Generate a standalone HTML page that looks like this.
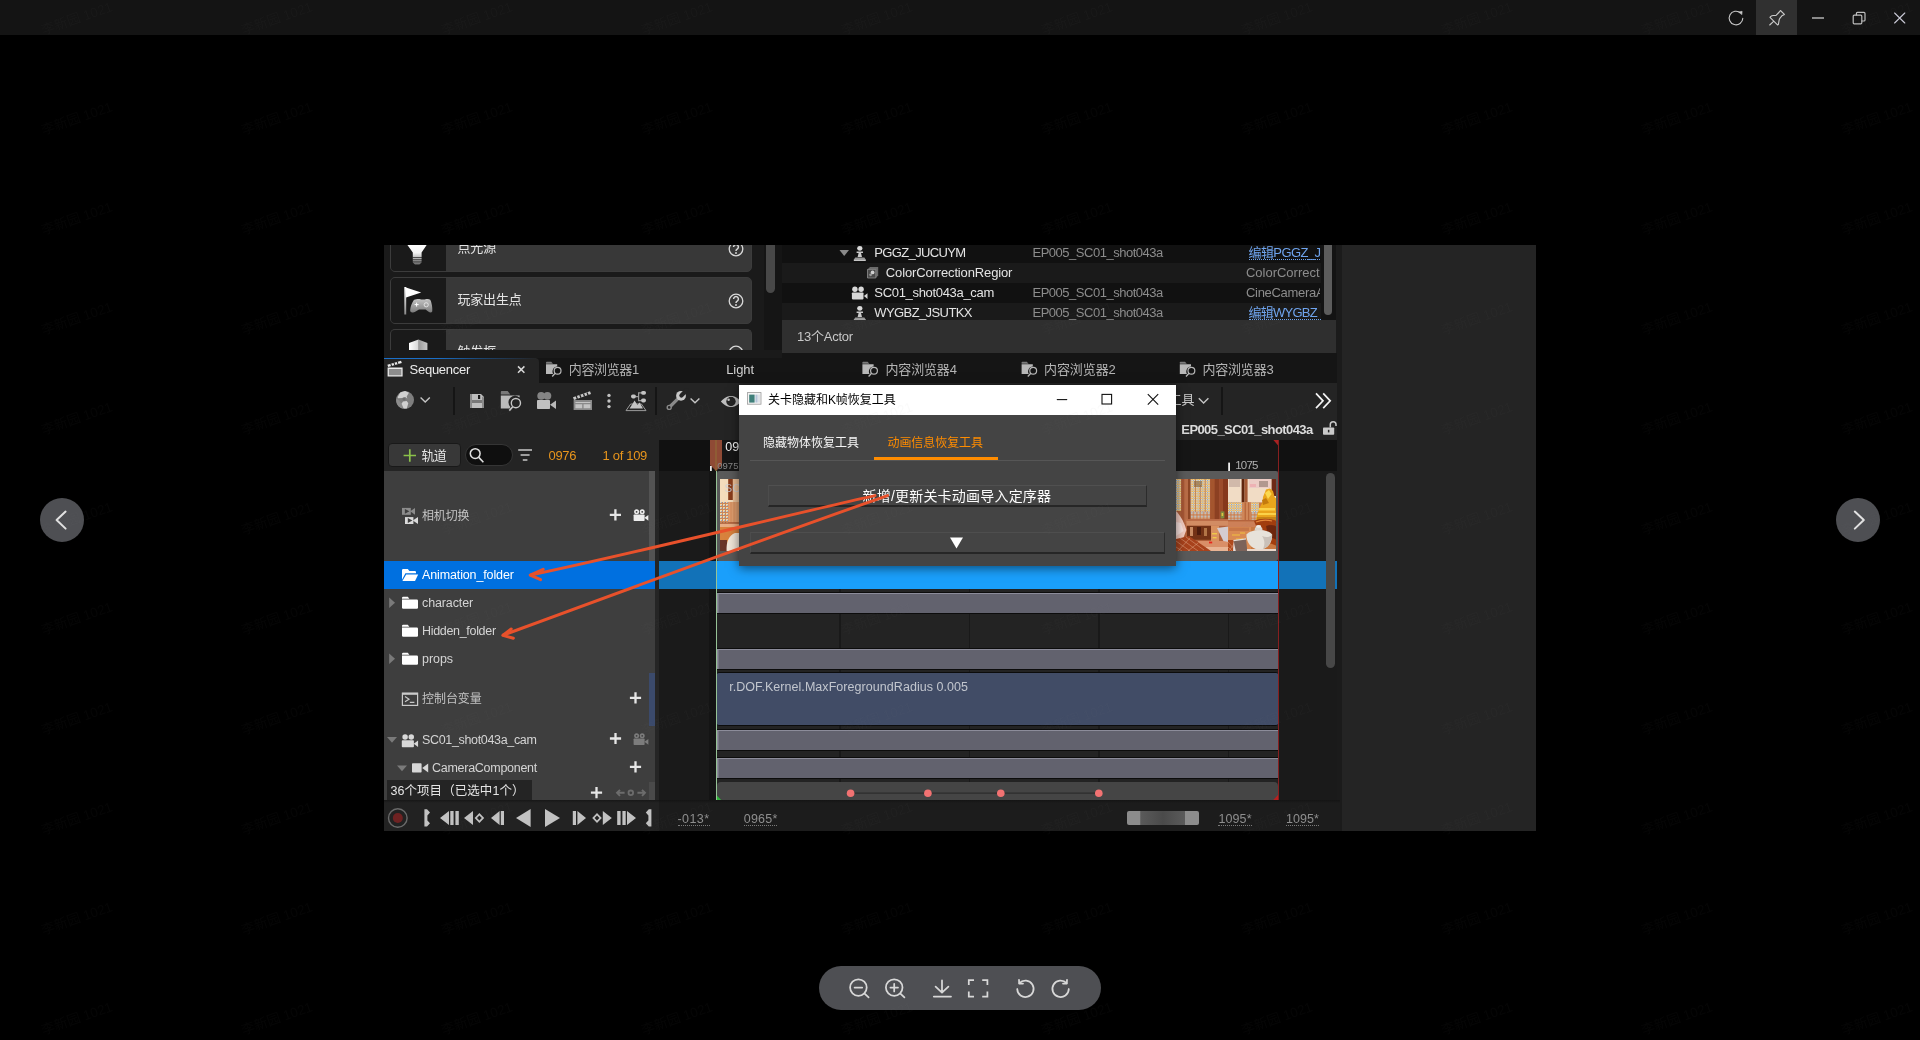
<!DOCTYPE html>
<html lang="zh"><head><meta charset="utf-8"><title>viewer</title>
<style>
*{box-sizing:border-box;margin:0;padding:0}
html,body{width:1920px;height:1040px;background:#000;overflow:hidden}
body{position:relative;font-family:"Liberation Sans","Noto Sans CJK SC",sans-serif;color:#c0c0c0;font-size:12.5px}
.a{position:absolute}
.t{position:absolute;white-space:nowrap;line-height:16px;height:16px}
#topbar{left:0;top:0;width:1920px;height:35px;background:#141414}
#pinbg{left:1756px;top:0;width:41px;height:35px;background:#303030}
.circ{width:44px;height:44px;border-radius:22px;background:#4e4f53}
#pill{left:819px;top:966px;width:282px;height:44px;border-radius:22px;background:#4e4f53}
#img{left:384px;top:245px;width:1152px;height:586px;overflow:hidden;background:#242424}
#w{left:-384px;top:-245px;width:1920px;height:1040px;will-change:transform}
svg{position:absolute;overflow:visible}
.wm{position:absolute;width:90px;height:18px;line-height:18px;text-align:center;font-size:13.5px;color:rgba(150,150,150,.042);transform:rotate(-19deg);white-space:nowrap;pointer-events:none}
.card{position:absolute;left:390px;width:362px;height:47px;border:1px solid #3c3c3c;border-radius:5px;background:#383838;overflow:hidden}
.card i{position:absolute;left:0;top:0;width:55px;height:47px;background:#1a1a1a}
.orow{position:absolute;left:782px;width:554px}
</style></head><body>
<div class="a" id="topbar"></div><div class="a" id="pinbg"></div>
<div class="a circ" style="left:40px;top:498px"></div>
<div class="a circ" style="left:1836px;top:498px"></div>
<div class="a" id="pill"></div>
<svg class="a" style="left:0;top:0" width="1920" height="1040" viewBox="0 0 1920 1040" fill="none" stroke="#d0d0d0" stroke-width="1.2" stroke-linecap="round" stroke-linejoin="round">
<!-- top bar icons -->
<g stroke="#cacaca" stroke-width="1.1">
<path d="M1742.8 18.2 A6.8 6.8 0 1 1 1740.5 12.9"/>
<path d="M1738.9 11.9 L1742.1 11.3 L1741.9 14.3 Z" fill="#cacaca" stroke-width=".6"/>
<path d="M1780.4 10.5 L1784.4 14.4 L1782.4 15.4 C1781 17 1779.6 18.4 1779.2 19.6 L1778.4 24.4 L1777.5 24.9 L1770 17.4 L1770.6 16.6 C1771.6 15.6 1772.6 15.5 1773.4 15.5 C1774.6 15.6 1775.6 15.6 1776.3 15.2 L1779.3 12 Z M1773.6 21.4 L1769.7 25"/>
</g>
<path d="M1812 18 H1824" stroke="#8a8a8a" stroke-width="2" stroke-linecap="butt"/>
<g stroke="#bdbdbd" stroke-width="1.2">
<rect x="1853.2" y="15.2" width="8.6" height="8.6" rx="1"/>
<path d="M1856.4 15 V13.4 a1 1 0 0 1 1 -1 H1864 a1 1 0 0 1 1 1 V20 a1 1 0 0 1 -1 1 H1862"/>
</g>
<path d="M1894.6 13 L1904.8 23 M1904.8 13 L1894.6 23" stroke="#c9c9d6" stroke-width="1.1"/>
<!-- side arrows -->
<g stroke="#e2e2e2" stroke-width="2">
<path d="M65.6 511.6 L56.6 520 L65.6 528.6"/>
<path d="M1854.8 511.6 L1863.8 520 L1854.8 528.6"/>
</g>
<!-- bottom pill icons -->
<g stroke="#d8d8d8" stroke-width="1.75">
<circle cx="858.4" cy="987.6" r="8.3"/><path d="M864.6 993.6 L868.6 997.4 M854.6 987.6 H862.2"/>
<circle cx="894.2" cy="987.6" r="8.3"/><path d="M900.4 993.6 L904.4 997.4 M890.4 987.6 H898 M894.2 983.8 V991.4"/>
<path d="M942 980.4 V992.4 M935.6 986.6 L942 992.6 L948.4 986.6 M933.8 996.6 H951"/>
<path d="M968.8 985 V980 H974 M982.2 980 H987.4 V985 M987.4 991.4 V996.6 H982.2 M974 996.6 H968.8 V991.4" stroke-linecap="butt" stroke-linejoin="miter"/>
<path d="M1019.4 983.2 A8.2 8.2 0 1 1 1017.2 989"/><path d="M1019 979.8 L1019.2 983.6 L1023 983.6"/>
<path d="M1066.6 983.2 A8.2 8.2 0 1 0 1068.8 989"/><path d="M1067 979.8 L1066.8 983.6 L1063 983.6"/>
</g>
</svg>

<div class="a" id="img"><div class="a" id="w">
<!-- upper: place actors panel -->
<div class="a" style="left:384px;top:245px;width:393px;height:105px;background:#1a1a1a;overflow:hidden">
</div>
<div class="a" style="left:764px;top:245px;width:13px;height:105px;background:#151515"></div>
<div class="a" style="left:766px;top:240px;width:9px;height:53px;border-radius:4.5px;background:#484848"></div>
<div class="a" style="left:777px;top:245px;width:5px;height:108px;background:#151515"></div>
<div class="card" style="top:225px"><i></i></div>
<div class="card" style="top:277px"><i></i></div>
<div class="card" style="top:329px;height:30px;border-bottom:none;border-radius:5px 5px 0 0"><i></i></div>
<svg class="a" style="left:0;top:0" width="1920" height="1040" viewBox="0 0 1920 1040">
<defs><clipPath id="cu"><rect x="384" y="245" width="400" height="105"/></clipPath><linearGradient id="gb" x1="0" y1="0" x2="0" y2="1"><stop offset="0" stop-color="#fff"/><stop offset=".45" stop-color="#f4f4f4"/><stop offset="1" stop-color="#6a6a6a"/></linearGradient>
<linearGradient id="gf" x1="0" y1="0" x2="0" y2="1"><stop offset="0" stop-color="#fff"/><stop offset="1" stop-color="#8a8a8a"/></linearGradient><linearGradient id="gp" x1="0" y1="0" x2="0" y2="1"><stop offset="0" stop-color="#c4c4c4"/><stop offset="1" stop-color="#7c7c7c"/></linearGradient>
<linearGradient id="gc" x1="0" y1="0" x2="1" y2="0"><stop offset="0" stop-color="#fff"/><stop offset=".5" stop-color="#d8d8d8"/><stop offset=".52" stop-color="#9a9a9a"/><stop offset="1" stop-color="#c8c8c8"/></linearGradient></defs>
<g clip-path="url(#cu)">
<!-- bulb -->
<path d="M406 243 L428 243 L421.6 252.5 L421.6 262.6 L419.4 264.6 L415 264.6 L412.8 262.6 L412.8 252.5 Z" fill="url(#gb)"/>
<g stroke="#1a1a1a" stroke-width=".7"><path d="M412.5 257.5H422M412.5 259.7H422M412.5 261.9H422"/></g>
<!-- flag + gamepad -->
<path d="M404.3 287 L406.2 287 L406.2 314.5 L404.3 314.5 Z" fill="url(#gf)"/>
<path d="M406 287.4 L421.2 292.4 L406 297.6 Z" fill="#fff"/>
<path d="M414.2 299.8 C416.5 298.6 421 298.8 421.5 299.6 L424.5 299.6 C425 298.8 429 298.6 430.2 299.8 C431.6 302 432.8 308.5 432.2 311.6 C431.6 312.8 429.6 312.6 428.6 311.8 L425.6 309.4 L419 309.4 L414.8 312 C413.4 312.8 411 312.4 410.2 311.2 C410 308 411.8 302.4 414.2 299.8 Z" fill="url(#gp)"/>
<path d="M414.6 304.6H418.6M416.6 302.6V306.6" stroke="#fff" stroke-width="1"/>
<circle cx="426.2" cy="304.8" r="2.1" fill="none" stroke="#e8e8e8" stroke-width=".9"/>
<!-- trigger box -->
<path d="M409 343 L418.5 339.6 L427.4 343 L427.4 352 L409 352 Z" fill="url(#gc)"/>
<!-- help icons -->
<g fill="none" stroke="#d8d8d8" stroke-width="1.3">
<circle cx="736" cy="249" r="6.8"/><circle cx="736" cy="301" r="6.8"/><circle cx="736" cy="353" r="6.8"/>
<path d="M733.6 299 a2.4 2.4 0 1 1 3.6 2.1 c-.9 .5 -1.2 .9 -1.2 1.9" stroke-width="1.5"/>
<path d="M733.6 247 a2.4 2.4 0 1 1 3.6 2.1 c-.9 .5 -1.2 .9 -1.2 1.9" stroke-width="1.5"/>
</g>
<circle cx="736" cy="305" r=".95" fill="#d8d8d8"/><circle cx="736" cy="253" r=".95" fill="#d8d8d8"/>
</g></svg>
<div class="a" style="left:384px;top:350px;width:398px;height:8px;background:#1a1a1a"></div>
<!-- outliner -->
<div class="orow" style="top:245px;height:18px;background:#111"></div>
<div class="orow" style="top:263px;height:20px;background:#1a1a1a"></div>
<div class="orow" style="top:283px;height:20px;background:#111"></div>
<div class="orow" style="top:303px;height:17px;background:#1a1a1a"></div>
<div class="orow" style="top:320px;height:33px;background:#2f2f2f"></div>
<div class="a" style="left:1321px;top:245px;width:15px;height:75px;background:#131313"></div>
<div class="a" style="left:1336px;top:245px;width:6px;height:586px;background:#1b1b1b"></div>
<div class="a" style="left:1324px;top:238px;width:8.4px;height:77.4px;border-radius:4.2px;background:#5c5c5c"></div>
<svg class="a" style="left:0;top:0" width="1920" height="1040" viewBox="0 0 1920 1040" fill="#d8d8d8">
<path d="M839.5 250 L849 250 L844.2 256 Z" fill="#8a8a8a"/>
<g id="pawn" transform="translate(0,12.2) scale(1,.95)"><circle cx="859.8" cy="248.6" r="2.6"/><path d="M856.6 252h6.4v1.6h-2l1 4.2h-4.4l1-4.2h-2z" fill="#c8c8c8"/><path d="M855.2 258.2h9.2l1.4 2.4h-12z" fill="#9a9a9a"/><path d="M853.8 260.4h12v1.4h-12z"/></g>
<use href="#pawn" y="60"/><rect x="850" y="320" width="20" height="4" fill="#2f2f2f"/>
<g transform="translate(866,266)"><path d="M1.5 3.4 L4 1 L12.2 1 L12.2 9.6 L9.8 12 L1.5 12 Z" fill="#6a6a6a"/><path d="M1.5 3.4 H9.8 V12 H1.5 Z" fill="#4a4a4a" stroke="#8a8a8a" stroke-width=".8"/><circle cx="6.6" cy="6.4" r="1.9" fill="#d0d0d0"/><circle cx="4.6" cy="8.8" r="1.4" fill="#9a9a9a"/></g>
<g transform="translate(851.5,286)"><circle cx="3.4" cy="3.2" r="2.7"/><circle cx="9.6" cy="3.2" r="2.7"/><rect x=".4" y="6.4" width="11.6" height="7" rx=".8"/><path d="M12.4 10 L16 7.2 V13 Z"/></g>
</svg>

<!-- tab bar -->
<div class="a" style="left:384px;top:353px;width:953px;height:30px;background:#151515"></div>
<div class="a" style="left:384px;top:350px;width:398px;height:8px;background:#1a1a1a"></div>
<div class="a" style="left:384px;top:358px;width:155px;height:25px;background:#242424;border-radius:0 4px 0 0"></div>
<div class="a" style="left:384px;top:358px;width:152px;height:1.4px;background:linear-gradient(90deg,#1a6fc8 0,#1a6fc8 35%,#1b436e 65%,#222e3c 90%,#242424 100%)"></div>
<svg class="a" style="left:0;top:0" width="1920" height="1040" viewBox="0 0 1920 1040">
<!-- sequencer tab icon -->
<rect x="388.4" y="368.4" width="13.4" height="7.4" fill="#8c8c8c"/><g fill="#ececec"><path d="M387.6 367.6 H402.6 V376.6 H387.6 Z M388.9 368.9 V375.3 H401.3 V368.9 Z" fill-rule="evenodd"/>
<path d="M387.4 364.8 L401 360.8 L401.8 363 L388.2 367 Z"/></g>
<g stroke="#242424" stroke-width="1.1"><path d="M390.6 363.4 l1 2.6 M393.8 362.4 l1 2.6 M397 361.4 l1 2.6"/></g>
<path d="M518 366.4 L524.4 372.8 M524.4 366.4 L518 372.8" stroke="#d8d8d8" stroke-width="1.5"/>
<!-- folder-search tab icons -->
<g id="fs" transform="translate(0,-.9)"><path d="M546 363.4 a.8 .8 0 0 1 .8 -.8 h4.4 l1.8 2 h-7z" fill="#7a7a7a"/><path d="M546 365.2 h11.2 v2.2 a5 5 0 0 0 -4 7.6 h-7.2 z" fill="#b8b8b8"/><circle cx="557.6" cy="371.6" r="3.4" fill="none" stroke="#b8b8b8" stroke-width="1.2"/><path d="M555.2 374.2 L552.2 377.4" stroke="#b8b8b8" stroke-width="1.3"/></g>
<use href="#fs" x="316.4"/><use href="#fs" x="475.6"/><use href="#fs" x="633.8"/>
</svg>

<!-- toolbar -->
<div class="a" style="left:384px;top:383px;width:953px;height:57px;background:#242424"></div>
<div class="a" style="left:384px;top:440px;width:275px;height:31px;background:#242424"></div>
<div class="a" style="left:453px;top:387px;width:2px;height:28px;background:#151515"></div>
<div class="a" style="left:655px;top:387px;width:2px;height:28px;background:#151515"></div>
<div class="a" style="left:1221px;top:387px;width:2px;height:28px;background:#151515"></div>
<svg class="a" style="left:0;top:0" width="1920" height="1040" viewBox="0 0 1920 1040">
<!-- globe -->
<circle cx="405" cy="400" r="9" fill="#7e7e7e"/>
<path d="M396.2 401 A9 9 0 0 0 403 408.8 L401.6 404 L399 400.6 L396.6 398.6 Z" fill="#8c8c8c"/>
<path d="M397.6 397.2 L400.2 392.5 L405.1 391.1 L408.9 392.7 L406.7 396.4 L407.3 398.6 L405.2 397 L402 398.1 L398.2 398.2 Z" fill="#d0d0d0"/>
<path d="M403 401.6 L406.7 401 L408.3 403.2 L406.8 408.4 L403.6 408.6 L401.5 403.8 Z" fill="#d0d0d0"/>
<circle cx="404" cy="398.9" r="1.5" fill="#6c6c6c"/>
<path d="M420.6 397.4 L425.2 402 L429.8 397.4" fill="none" stroke="#c4c4c4" stroke-width="1.4"/>
<!-- save -->
<path d="M470.2 394 H481 L484 397 V408 H470.2 Z" fill="#bebebe"/>
<path d="M470.2 400 H484 V403 H470.2 Z" fill="#787878"/><path d="M470.2 394 H472 V408 H470.2Z M482 396.4 L484 397.4 V408 H482Z" fill="#8a8a8a"/>
<rect x="478" y="395" width="2.2" height="4" fill="#1a1a1a"/>
<!-- folder search -->
<path d="M500.8 392 a.9 .9 0 0 1 .9 -.9 h6 l2.6 3.4 h-9.5z" fill="#7a7a7a"/>
<path d="M500.8 395.4 H519.6 V397.6 A6.5 6.5 0 0 0 510.4 407 L509.6 408.4 H500.8 Z" fill="#bcbcbc"/>
<circle cx="515.9" cy="403.1" r="4.6" fill="none" stroke="#c6c6c6" stroke-width="1.4"/>
<path d="M512.7 406.7 L509.3 410.6" stroke="#c6c6c6" stroke-width="1.6"/>
<!-- camera -->
<circle cx="541.2" cy="395.8" r="3.9" fill="#848484"/><circle cx="547.4" cy="395.8" r="3.9" fill="#848484"/>
<rect x="537" y="400" width="13" height="9" rx=".8" fill="#c0c0c0"/><path d="M550 404.7 L556 400.4 V409 Z" fill="#b8b8b8"/>
<!-- clapper -->
<path d="M573.6 400 H592 V410 H573.6 Z" fill="#8a8a8a"/><path d="M575.4 402 H590.4 V403 H575.4Z M575.4 404.2 H582.2 V408.2 H575.4Z M583.6 404.2 H590.4 V408.2 H583.6Z" fill="#c4c4c4"/>
<path d="M573 397.2 L590 391.2 L591 394 L574 400 Z" fill="#c8c8c8"/>
<g stroke="#242424" stroke-width="1.3"><path d="M576.2 396 l1.2 3 M579.8 394.8 l1.2 3 M583.4 393.6 l1.2 3 M587 392.4 l1.2 3"/></g>
<!-- dots -->
<circle cx="609" cy="395.4" r="1.7" fill="#c4c4c4"/><circle cx="609" cy="401" r="1.7" fill="#c4c4c4"/><circle cx="609" cy="406.6" r="1.7" fill="#c4c4c4"/>
<!-- landscape/graph icon -->
<path d="M626 410.6 L630.6 404 H641.4 L646 410.6 Z" fill="none" stroke="#9a9a9a" stroke-width="1"/>
<path d="M629.6 408.6 L634.6 400.4 L637.4 405 L639.6 402.4 L643 408.6 Z" fill="#c4c4c4"/>
<rect x="631" y="394.6" width="5" height="3.8" rx="1.8" fill="#c4c4c4"/><rect x="641" y="391" width="5" height="3.8" rx="1.8" fill="#c4c4c4"/><rect x="641" y="398.6" width="5" height="3.8" rx="1.8" fill="#c4c4c4"/>
<path d="M636 396.6 H638.4 M641 392.8 H638.6 V400.6 H641" fill="none" stroke="#9a9a9a" stroke-width="1.2"/>
<!-- wrench -->
<path d="M669.6 407 L678.6 398.2" stroke="#8a8a8a" stroke-width="3.2" stroke-linecap="round"/>
<circle cx="669.2" cy="407.4" r="2" fill="#242424" stroke="#8a8a8a" stroke-width="1.4"/>
<circle cx="681" cy="395.8" r="4.9" fill="#c8c8c8"/>
<path d="M681.4 395.4 L686.6 390.2" stroke="#242424" stroke-width="4.2" stroke-linecap="round"/>
<path d="M690.6 398.4 L695 402.8 L699.4 398.4" fill="none" stroke="#c4c4c4" stroke-width="1.4"/>
<!-- eye -->
<path d="M720.8 401.5 C725 397 728.4 396 731 396 C733.6 396 737 397 741.2 401.5 C737 406 733.6 407 731 407 C728.4 407 725 406 720.8 401.5 Z" fill="#bebebe"/>
<circle cx="731" cy="401.5" r="4.7" fill="#242424"/><circle cx="728.6" cy="399.8" r="1.25" fill="#bebebe"/>
<!-- right: chevron after 工具, >> -->
<path d="M1198.8 398.2 L1203.6 403 L1208.4 398.2" fill="none" stroke="#c4c4c4" stroke-width="1.4"/>
<path d="M1316 393.4 L1323 400.8 L1316 408.2 M1323.2 393.4 L1330.2 400.8 L1323.2 408.2" fill="none" stroke="#f4f4f4" stroke-width="1.7"/>
<!-- lock open -->
<path d="M1330.3 427.6 V424.6 a2.85 2.85 0 0 1 5.7 0 v1.4" fill="none" stroke="#cacaca" stroke-width="1.5"/>
<rect x="1323" y="427.4" width="11.2" height="7.4" rx=".8" fill="#cacaca"/><rect x="1327.9" y="429.8" width="1.5" height="2.6" fill="#242424"/>
</svg>
<!-- 轨道 button, search, filter -->
<div class="a" style="left:388.4px;top:443.4px;width:72.2px;height:24px;border:1px solid #191919;border-radius:4px;background:#383838"></div>
<div class="a" style="left:464.8px;top:444.4px;width:48.6px;height:21.4px;border:1px solid #353535;border-radius:11px;background:#0f0f0f"></div>
<svg class="a" style="left:0;top:0" width="1920" height="1040" viewBox="0 0 1920 1040" fill="none">
<path d="M403.6 455.5 H416 M409.8 449.2 V461.8" stroke="#8bc24a" stroke-width="1.7"/>
<circle cx="475.2" cy="453.6" r="4.9" stroke="#e0e0e0" stroke-width="1.5"/><path d="M478.8 457.4 L483.4 462.2" stroke="#e0e0e0" stroke-width="1.6"/>
<path d="M518.2 450 H532 M520.6 455 H529.6 M522.8 460 H527.4" stroke="#c8c8c8" stroke-width="1.5"/>
</svg>

<!-- tree -->
<div class="a" style="left:384px;top:471px;width:271px;height:330px;background:#3e3e3e"></div>
<div class="a" style="left:649px;top:471px;width:6px;height:90px;background:#535353"></div>
<div class="a" style="left:649px;top:673px;width:6px;height:53px;background:#3b4a6b"></div>
<div class="a" style="left:649px;top:782px;width:6px;height:19px;background:#4a4a4a"></div>
<div class="a" style="left:655px;top:471px;width:4px;height:330px;background:#252525"></div>
<div class="a" style="left:384px;top:561px;width:271px;height:28px;background:#0070e0"></div>
<div class="a" style="left:386.5px;top:780px;width:145px;height:21px;background:#242424"></div>
<svg class="a" style="left:0;top:0" width="1920" height="1040" viewBox="0 0 1920 1040">
<defs>
<g id="fold"><path d="M0 1.2 a1.2 1.2 0 0 1 1.2 -1.2 h4.6 l1.6 1.9 h-7.4z"/><path d="M0 2.6 h14.8 a1.2 1.2 0 0 1 1.2 1.2 v7 a1.2 1.2 0 0 1 -1.2 1.2 h-13.6 a1.2 1.2 0 0 1 -1.2 -1.2z"/></g>
<g id="plus"><path d="M-5.6 0 H5.6 M0 -5.6 V5.6" stroke-width="2.3" fill="none"/></g>
<g id="scam"><circle cx="3" cy="2.6" r="2.5"/><circle cx="8.6" cy="2.6" r="2.5"/><rect x="0" y="5.4" width="11" height="6.4" rx=".7"/><path d="M10.8 8.6 L14.8 5.7 V11.6 Z"/></g>
</defs>
<!-- camera cuts icon -->
<g fill="#8c8c8c"><rect x="402" y="507.9" width="8.8" height="6.9"/><path d="M410.2 511.3 L415 507.9 V514.8 Z"/></g>
<path d="M404.9 508.9 L409.4 511.3 L404.9 513.8 Z" fill="#3e3e3e"/>
<g fill="#dadada"><rect x="405" y="517.1" width="8.4" height="6.9"/><path d="M412.8 520.5 L418 517.1 V524 Z"/></g>
<path d="M407.8 518.1 L412.4 520.5 L407.8 523 Z" fill="#3e3e3e"/>
<g stroke="#e6e6e6"><use href="#plus" x="615.4" y="514.9"/><use href="#plus" x="635.5" y="697.8"/><use href="#plus" x="615.5" y="738.5"/><use href="#plus" x="635.5" y="766.8"/><use href="#plus" x="596.5" y="792.7"/></g>
<g fill="#ececec"><use href="#scam" x="633.6" y="509.2"/></g>
<circle cx="636.6" cy="511.8" r=".9" fill="#3e3e3e"/><circle cx="642.2" cy="511.8" r=".9" fill="#3e3e3e"/>
<g fill="#7c7c7c"><use href="#scam" x="633.6" y="733.2"/></g>
<circle cx="636.6" cy="735.8" r=".9" fill="#3e3e3e"/><circle cx="642.2" cy="735.8" r=".9" fill="#3e3e3e"/>
<!-- folders -->
<g fill="#fff"><use href="#fold" x="402" y="596.8"/><use href="#fold" x="402" y="624.8"/><use href="#fold" x="402" y="652.8"/>
<path d="M402 570.2 a1.2 1.2 0 0 1 1.2 -1.2 h4.6 l1.6 1.9 h5.4 a1.2 1.2 0 0 1 1.2 1.2 v1.2 h-10.6 l-3.4 6.4z"/><path d="M406.2 574.4 h12 l-3.2 6.6 h-12.6z"/></g>
<g fill="#7a7a7a"><path d="M389.2 597.6 L395 602.8 L389.2 608 Z"/><path d="M389.2 653.6 L395 658.8 L389.2 664 Z"/>
<path d="M387 737 H397 L392 742.8 Z"/><path d="M397 765.4 H407 L402 771.2 Z"/></g>
<!-- console icon -->
<rect x="402.4" y="693.2" width="15.2" height="12.2" fill="none" stroke="#cacaca" stroke-width="1.2"/><rect x="402" y="692.8" width="16" height="2" fill="#cacaca"/>
<path d="M405 696.6 L409 699.2 L405 701.8 M409.8 702.4 H414.4" fill="none" stroke="#c8c8c8" stroke-width="1.2"/>
<!-- cam icons -->
<g fill="#d8d8d8"><g transform="translate(401.8,734.2) scale(1.1)"><use href="#scam"/></g>
<rect x="412" y="763.2" width="9.6" height="9.4" rx=".8"/><path d="M422.2 768 L428.2 763.6 V772.4 Z"/></g>
<!-- key nav -->
<g stroke="#6c6c6c" stroke-width="1.9" fill="none"><path d="M624.6 792.8 H617 M620 789.8 L617 792.8 L620 795.8"/><circle cx="630.8" cy="792.8" r="2.3" stroke-width="1.8"/><path d="M637.4 792.8 H645 M642 789.8 L645 792.8 L642 795.8"/></g>
</svg>

<!-- timeline -->
<div class="a" style="left:659px;top:440px;width:678px;height:31px;background:#111"></div><div class="a" style="left:717px;top:440px;width:561px;height:31px;background:#161616"></div>
<div class="a" style="left:659px;top:471px;width:678px;height:330px;background:#1a1a1a"></div>
<div class="a" style="left:1337px;top:358px;width:5px;height:474px;background:#1b1b1b"></div>
<div class="a" style="left:709px;top:471px;width:7px;height:330px;background:#141414"></div>
<div class="a" style="left:717px;top:471px;width:561px;height:330px;background:#232323"></div>
<!-- grid lines -->
<div class="a" style="left:839.3px;top:471px;width:1.5px;height:330px;background:#191919"></div>
<div class="a" style="left:968.6px;top:471px;width:1.5px;height:330px;background:#191919"></div>
<div class="a" style="left:1098.3px;top:471px;width:1.5px;height:330px;background:#191919"></div>
<div class="a" style="left:1227.6px;top:471px;width:1.5px;height:330px;background:#191919"></div>
<!-- camera cut section -->
<div class="a" style="left:717px;top:471px;width:561px;height:90px;background:#5a5a5a;border-radius:2px"></div>
<svg class="a" style="left:0;top:0" width="1920" height="1040" viewBox="0 0 1920 1040">
<defs>
<linearGradient id="th1" x1="0" y1="0" x2="0" y2="1"><stop offset="0" stop-color="#9a5232"/><stop offset=".55" stop-color="#b4683e"/><stop offset=".6" stop-color="#cf8a5e"/><stop offset=".68" stop-color="#b86a44"/><stop offset="1" stop-color="#a4502c"/></linearGradient>
<pattern id="lat" width="3" height="3" patternUnits="userSpaceOnUse"><rect width="3" height="3" fill="#c9875a"/><rect width="2" height="2" fill="#f1d6a8"/><rect x="1" y="1" width="1" height="1" fill="#8fb1d9"/></pattern>
<filter id="bl0" x="-5%" y="-5%" width="110%" height="110%"><feGaussianBlur stdDeviation=".5"/></filter><pattern id="wv" width="3" height="3" patternUnits="userSpaceOnUse"><rect width="3" height="3" fill="#a5401e"/><path d="M0 0L3 3M3 0L0 3" stroke="#d89a78" stroke-width=".6"/></pattern>
</defs>
<!-- left thumb (mostly hidden) -->
<g filter="url(#bl0)">
<rect x="720" y="479" width="60" height="72" fill="#d8905c"/>
<rect x="720" y="479" width="20" height="23" fill="#f4dcbc"/><rect x="728.2" y="479" width="4.6" height="21" fill="#8a3c1c"/><rect x="733" y="479" width="7" height="23" fill="#eec29a"/>
<rect x="720" y="502" width="8.4" height="21" fill="url(#lat)"/><rect x="728.4" y="502" width="12" height="21" fill="#e2a070"/><path d="M731 502 V523 M734 502 V523" stroke="#cf8656" stroke-width=".8"/>
<rect x="720" y="523" width="20" height="4" fill="#e9ae84"/><rect x="720" y="522.4" width="20" height="1.2" fill="#9a4a26"/>
<rect x="720" y="527" width="20" height="24" fill="#d8823c"/><rect x="720" y="540" width="7" height="11" fill="#6a3426"/>
<path d="M726.6 551 C726 542 729 535 735 533 L740 533 V551 Z" fill="#f1e6d8"/>
</g>
<!-- right thumbs -->
<clipPath id="ct1"><rect x="1170" y="479" width="58" height="72"/></clipPath>
<clipPath id="ct2"><rect x="1228" y="479" width="48" height="72"/></clipPath>
<filter id="bl" x="-5%" y="-5%" width="110%" height="110%"><feGaussianBlur stdDeviation=".55"/></filter>
<filter id="bl2" x="-5%" y="-5%" width="110%" height="110%"><feGaussianBlur stdDeviation=".9"/></filter>
<pattern id="lat2" width="2.4" height="2.4" patternUnits="userSpaceOnUse"><rect width="2.4" height="2.4" fill="#eccba0"/><rect width="1.1" height="1.1" fill="#6f9fd6"/><rect x="1.2" y="1.2" width="1.1" height="1.1" fill="#e7a628"/><rect x="1.2" y="0" width="1.1" height="1" fill="#f6e2c0"/></pattern>
<pattern id="grd" width="3.4" height="3.6" patternUnits="userSpaceOnUse"><rect width="3.4" height="3.6" fill="#c27a52"/><rect x=".6" y=".6" width="2.3" height="2.4" fill="#edcfa6"/><rect x="1.1" y="1.1" width="1.2" height="1.2" fill="#84a9d8"/></pattern>
<g clip-path="url(#ct1)"><g filter="url(#bl)">
<rect x="1168" y="477" width="62" height="76" fill="#b0603a"/>
<rect x="1176" y="479" width="5.4" height="32" fill="url(#lat2)"/>
<rect x="1181.2" y="477" width="3.2" height="46" fill="#a65634"/><rect x="1184.4" y="477" width="3.6" height="46" fill="#b86c46"/><rect x="1188" y="477" width="2.6" height="46" fill="#8e4628"/>
<rect x="1190.6" y="478" width="19.6" height="34" fill="url(#lat2)"/>
<path d="M1195.4 479 V512 M1200.2 485 V512 M1205.2 479 V512" stroke="#bd7a52" stroke-width=".9"/>
<rect x="1194" y="481" width="8" height="6" fill="#7a5a38" opacity=".55"/>
<rect x="1190.6" y="511.6" width="19.6" height="7.6" fill="url(#grd)"/>
<rect x="1210.2" y="477" width="4.4" height="44" fill="#a4542f"/><rect x="1214.6" y="477" width="4.6" height="44" fill="#8c3f22"/><rect x="1219.2" y="477" width="3.6" height="44" fill="#9c4c2c"/><rect x="1222.8" y="477" width="5.4" height="44" fill="#86391e"/>
<rect x="1220.6" y="511.4" width="3.8" height="7" fill="#7e8a3c"/><rect x="1221.6" y="513" width="1.6" height="3" fill="#e0c040"/>
<rect x="1186.4" y="519.2" width="42" height="6.6" fill="#d28c64"/><rect x="1186.4" y="519.2" width="42" height="1.6" fill="#b86842"/>
<rect x="1187" y="525.8" width="24" height="14" fill="#733319"/><rect x="1190" y="527" width="3" height="9" fill="#c88a62"/><rect x="1197" y="527" width="4" height="8" fill="#4e1e0e"/><rect x="1204" y="528" width="3" height="8" fill="#b27446"/>
<rect x="1211" y="525.8" width="8" height="25" fill="#d9915f"/><rect x="1212" y="533" width="5" height="1.4" fill="#f0c848"/><rect x="1212.6" y="537" width="4" height="1.4" fill="#f0c848"/>
<rect x="1198" y="541" width="30" height="10" fill="#d98f68"/><rect x="1206" y="547" width="22" height="4" fill="#e8b494"/>
<path d="M1176 511 C1179 514 1184 521 1186.4 530 L1183 539 L1176 541 Z" fill="#f3cdc2"/><path d="M1176 522 L1181 523 L1183.6 531 L1176 536 Z" fill="#fbe4e0"/>
<path d="M1176 539 L1189 536 L1211 551 L1176 551 Z" fill="#a8421c"/><path d="M1176 541 L1190 551 M1180 538 L1198 551 M1186 537 L1204 550 M1176 547 L1182 551 M1190 538 L1178 551 M1198 543 L1188 551" stroke="#e0a888" stroke-width=".5"/>
<path d="M1217 528 L1228.4 526.6 V542 L1223.4 541 Z" fill="#d4ccd0"/>
<rect x="1209" y="541.6" width="3.2" height="1.8" fill="#e8281c"/>
</g></g>
<g clip-path="url(#ct2)"><g filter="url(#bl)">
<rect x="1226" y="477" width="52" height="76" fill="#c9783f"/>
<rect x="1226" y="477" width="52" height="25.4" fill="#f1dcc5"/>
<path d="M1229 479 h11 v8 h-11z" fill="#c9b0a2" opacity=".8"/><path d="M1249 479 h22 v9 h-22z" fill="#ebcac4" opacity=".9"/><path d="M1259 481 h9 v6 h-9z" fill="#9a8278" opacity=".7"/><path d="M1250 484 h6 v3 h-6z" fill="#f0a0a8" opacity=".6"/>
<rect x="1241.6" y="477" width="3" height="25.4" fill="#5e2610"/><rect x="1244.6" y="477" width="3" height="25.4" fill="#a45a36"/>
<rect x="1271.6" y="477" width="5" height="19" fill="#6e2c12"/>
<rect x="1228" y="502.4" width="14" height="10" fill="url(#lat2)"/><rect x="1228" y="512" width="14" height="8" fill="url(#grd)"/>
<rect x="1242" y="502.4" width="9" height="18" fill="#cf8658"/><rect x="1244.6" y="502.4" width="1.4" height="18" fill="#b8683e"/><rect x="1248" y="502.4" width="1.2" height="18" fill="#b8683e"/>
<rect x="1251" y="502.4" width="8" height="10" fill="url(#lat2)"/><rect x="1251" y="512" width="8" height="8" fill="url(#grd)"/>
<path d="M1263 497 L1266 489.6 L1270 488.6 L1273 491 L1274.6 497 L1276.6 499 V521 H1255.6 L1257.6 513 L1260 507 L1262.6 502 Z" fill="#eaa51c"/>
<path d="M1265 493 L1269 490 L1271.6 494 L1268 499 Z" fill="#fbd850"/><path d="M1259 508 H1275 V510.4 H1259Z M1258 513 H1276 V515 H1258Z" fill="#fbd248"/><path d="M1262 500 L1266 498 L1269 503 L1263 505Z" fill="#c47a10"/><path d="M1257 517 H1276 V520.6 H1257Z" fill="#c98414"/>
<rect x="1228" y="520" width="28" height="7" fill="#cd8058"/><rect x="1228" y="520" width="28" height="1.4" fill="#b4643c"/>
<path d="M1254 521 C1260 518 1270 518 1277 521 V546 L1262 540 Z" fill="#a23c10"/><path d="M1266 526 C1270 524 1275 525 1277 527 V540 L1268 536Z" fill="#6e2708"/><path d="M1256 522 C1262 519.6 1268 520 1272 521" stroke="#e88a3c" stroke-width="1.2" fill="none"/>
<rect x="1228" y="527" width="23" height="25" fill="#d98a52"/><rect x="1229" y="527.6" width="20" height="3.4" fill="#c87646"/><path d="M1232 535 h8 M1236 539 h7 M1240 533 h5" stroke="#f0c040" stroke-width="1"/>
<path d="M1228 540 h8 l3 12 h-11z" fill="#b04a1e"/><path d="M1228 542 L1236 551 M1228 547 L1232 551 M1236 541 L1229 551" stroke="#e0a080" stroke-width=".5"/>
<path d="M1233.6 540.4 L1246 538.6 L1247.4 552 L1235.4 552 Z" fill="#7b645a"/><path d="M1233.4 540.6 L1246 538.8" stroke="#e8dcd4" stroke-width="1.2"/><path d="M1233.6 541 L1236 552 L1233 552Z" fill="#e4dcd8"/>
<path d="M1247 549 H1277 V552 H1247Z" fill="#ead8cc"/>
<path d="M1246.4 534.4 C1249 531.6 1254 530 1259.4 530 C1265 530 1270 531.6 1272.2 534.4 C1272.4 541 1268.6 549.4 1259.4 549.4 C1250.4 549.4 1246.2 541 1246.4 534.4 Z" fill="#e7e2da"/>
<path d="M1254.6 530.4 C1254.6 527.6 1256 526 1258.6 526 C1261.2 526 1262.6 527.6 1262.6 530.4 Z" fill="#ddd6ce"/><ellipse cx="1258.6" cy="526.4" rx="2.6" ry="1.3" fill="#f2eee8"/>
<path d="M1262 536 C1266 538 1270 537 1272 535 C1272 541 1269 547 1263 549 C1265 545 1265 540 1262 536Z" fill="#c9c0b8"/>
</g></g>
</svg>
<span class="t" style="left:724.6px;top:479.8px;font-size:11.5px;color:rgba(200,208,220,.8)">SC01_shot043a_cam</span>
<!-- selected row band -->
<div class="a" style="left:659px;top:561px;width:678px;height:28px;background:#1272b8"></div>
<div class="a" style="left:717px;top:561px;width:561px;height:28px;background:#1a9ffb"></div>
<style>.bar{position:absolute;left:717px;width:561px;height:22px;background:#62626e;border-top:1px solid #0c0c0c;border-bottom:1px solid #0c0c0c;box-shadow:inset 0 1px 0 #8c8c9a,inset 1.5px 0 0 #8c8c9a}</style>
<div class="bar" style="top:592px"></div>
<div class="bar" style="top:648px"></div>
<div class="a" style="left:717px;top:672px;width:561px;height:54px;background:#414c66;border-top:1px solid #0c0c0c;border-bottom:1px solid #0c0c0c;border-radius:2px"></div>
<div class="bar" style="top:729px"></div>
<div class="bar" style="top:757px"></div>
<div class="a" style="left:717px;top:781.5px;width:561px;height:19px;background:#454545;border-radius:4px 4px 0 0"></div>
<svg class="a" style="left:0;top:0" width="1920" height="1040" viewBox="0 0 1920 1040">
<path d="M850.6 793.2 H1098.8" stroke="#2c2c2c" stroke-width="1.2"/>
<g fill="#f27272"><circle cx="850.6" cy="793.2" r="3.8"/><circle cx="927.9" cy="793.2" r="3.8"/><circle cx="1000.8" cy="793.2" r="3.8"/><circle cx="1098.8" cy="793.2" r="3.8"/></g>
<path d="M716 794.6 L721.6 800.4 H716 Z" fill="#2fb43a"/><path d="M1278.4 794.6 L1272.8 800.4 H1278.4 Z" fill="#b82020"/>
<!-- scrub handle -->
<path d="M710 440 H722 V465 L716 471 L710 465 Z" fill="#8f4a35"/><path d="M716 440 V471" stroke="#8f7a35" stroke-width=".8"/>
<rect x="710" y="466" width="1.8" height="5" fill="#e8e8e8"/>
<rect x="1228.2" y="462.6" width="1.8" height="8.4" fill="#f0f0f0"/>
<path d="M1273.4 440 H1279 V446.6 Z" fill="#a82222"/>
</svg>
<div class="a" style="left:715.5px;top:471px;width:1.5px;height:330px;background:#96c396"></div>
<div class="a" style="left:1277.5px;top:440px;width:1.6px;height:361px;background:#861f1f"></div>
<div class="a" style="left:1326px;top:473px;width:9px;height:195px;border-radius:4.5px;background:#474747"></div>

<!-- transport -->
<div class="a" style="left:384px;top:800px;width:953px;height:32px;background:#222"></div>
<div class="a" style="left:384px;top:800px;width:953px;height:3px;background:linear-gradient(#171717,#222)"></div>
<div class="a" style="left:659px;top:800px;width:681px;height:32px;background:#1c1c1c"></div>
<div class="a" style="left:659px;top:800px;width:681px;height:3px;background:linear-gradient(#141414,#1c1c1c)"></div>
<svg class="a" style="left:0;top:0" width="1920" height="1040" viewBox="0 0 1920 1040" fill="#c2c2c2">
<circle cx="397.8" cy="818" r="9.3" fill="none" stroke="#6a6a6a" stroke-width="1.4"/><circle cx="397.8" cy="818" r="5" fill="#6e2222"/>
<path d="M424.4 809.2 H427 L430 812.6 L427.4 815.4 V820.4 L430 823.2 L427 826.6 H424.4 Z"/>
<path d="M440 818 L449 811 V825 Z M450.3 811 H453.6 V825 H450.3Z M455.4 811 H458.8 V825 H455.4Z"/>
<path d="M464 818 L473 811 V825 Z"/><path d="M479.4 813 L484.2 818 L479.4 823 L474.6 818 Z M479.4 815.4 L477 818 L479.4 820.6 L481.8 818Z" fill-rule="evenodd"/>
<path d="M491 818 L499.6 811 V825 Z M500.8 811 H504 V825 H500.8Z"/>
<path d="M516 818 L530.6 809 V827 Z"/>
<path d="M560 818 L545 809 V827 Z"/>
<path d="M586 818 L577.4 811 V825 Z M572.8 811 H576 V825 H572.8Z"/>
<path d="M611.8 818 L602.8 811 V825 Z"/><path d="M597 813 L601.8 818 L597 823 L592.2 818 Z M597 815.4 L594.6 818 L597 820.6 L599.4 818Z" fill-rule="evenodd"/>
<path d="M636 818 L627 811 V825 Z M622.4 811 H625.7 V825 H622.4Z M617.2 811 H620.6 V825 H617.2Z"/>
<path d="M651.4 809.2 H648.8 L645.8 812.6 L648.4 815.4 V820.4 L645.8 823.2 L648.8 826.6 H651.4 Z"/>
</svg>
<div class="a" style="left:1127px;top:811px;width:72px;height:14px;border-radius:2px;background:linear-gradient(90deg,#8c8c8c 0,#8c8c8c 18%,#5a5a5a 19%,#4a4a4a 50%,#5a5a5a 80%,#8c8c8c 81%,#8c8c8c 100%)"></div>

<span class="t" id="c1" style="left:457.50px;top:239.50px;font-size:13px;color:#e4e4e4;letter-spacing:-0.172px;">点光源</span>
<span class="t" id="c2" style="left:457.50px;top:291.50px;font-size:13px;color:#e4e4e4;letter-spacing:-0.203px;">玩家出生点</span>
<span class="t" id="c3" style="left:457.50px;top:343.50px;font-size:13px;color:#e4e4e4;letter-spacing:-0.172px;height:6.5px;overflow:hidden;">触发框</span>
<span class="t" id="o1" style="left:874.30px;top:244.50px;font-size:13px;color:#e4e4e4;letter-spacing:-0.639px;">PGGZ_JUCUYM</span>
<span class="t" id="o2" style="left:885.80px;top:264.50px;font-size:13px;color:#e4e4e4;letter-spacing:-0.135px;">ColorCorrectionRegior</span>
<span class="t" id="o3" style="left:874.30px;top:284.50px;font-size:13px;color:#e4e4e4;letter-spacing:-0.319px;">SC01_shot043a_cam</span>
<span class="t" id="o4" style="left:874.30px;top:304.50px;font-size:13px;color:#e4e4e4;letter-spacing:-0.596px;">WYGBZ_JSUTKX</span>
<span class="t" id="s1" style="left:1032.50px;top:244.50px;font-size:13px;color:#8c8c8c;letter-spacing:-0.485px;">EP005_SC01_shot043a</span>
<span class="t" id="s3" style="left:1032.50px;top:284.50px;font-size:13px;color:#8c8c8c;letter-spacing:-0.485px;">EP005_SC01_shot043a</span>
<span class="t" id="s4" style="left:1032.50px;top:304.50px;font-size:13px;color:#8c8c8c;letter-spacing:-0.485px;">EP005_SC01_shot043a</span>
<span class="t" id="t1" style="left:1248.50px;top:244.50px;font-size:13px;color:#6fa4ee;letter-spacing:-0.597px;border-bottom:1px dotted #6fa4ee;height:15px;">编辑PGGZ_J</span>
<span class="t" id="t2" style="left:1246.00px;top:264.50px;font-size:13px;color:#8c8c8c;letter-spacing:-0.016px;">ColorCorrect</span>
<span class="t" id="t3" style="left:1246.00px;top:284.50px;font-size:13px;color:#8c8c8c;letter-spacing:0.000px;width:74px;overflow:hidden;letter-spacing:-.3px;">CineCameraActor</span>
<span class="t" id="t4" style="left:1248.50px;top:304.50px;font-size:13px;color:#6fa4ee;letter-spacing:0.000px;border-bottom:1px dotted #6fa4ee;height:15px;width:72.3px;overflow:hidden;letter-spacing:-.75px;">编辑WYGBZ_JSUTKX</span>
<span class="t" id="st" style="left:796.90px;top:329.00px;font-size:13px;color:#c8c8c8;letter-spacing:-0.214px;">13个Actor</span>
<span class="t" id="tb1" style="left:409.60px;top:361.60px;font-size:13px;color:#ececec;letter-spacing:-0.277px;">Sequencer</span>
<span class="t" id="tb2" style="left:568.75px;top:361.50px;font-size:13px;color:#b4b4b4;letter-spacing:-0.372px;">内容浏览器1</span>
<span class="t" id="tb3" style="left:726.20px;top:361.50px;font-size:13px;color:#d0d0d0;letter-spacing:-0.081px;">Light</span>
<span class="t" id="tb4" style="left:885.50px;top:361.50px;font-size:13px;color:#b4b4b4;letter-spacing:-0.172px;">内容浏览器4</span>
<span class="t" id="tb5" style="left:1044.00px;top:361.50px;font-size:13px;color:#b4b4b4;letter-spacing:-0.089px;">内容浏览器2</span>
<span class="t" id="tb6" style="left:1202.40px;top:361.50px;font-size:13px;color:#b4b4b4;letter-spacing:-0.172px;">内容浏览器3</span>
<span class="t" id="ju" style="left:1168.60px;top:392.00px;font-size:13px;color:#cccccc;letter-spacing:0.000px;letter-spacing:-.2px;">工具</span>
<span class="t" id="bc" style="left:1181.30px;top:421.60px;font-size:13px;color:#dcdcdc;letter-spacing:-0.583px;font-weight:bold;">EP005_SC01_shot043a</span>
<span class="t" id="gd" style="left:421.40px;top:447.50px;font-size:13px;color:#e4e4e4;letter-spacing:-0.608px;">轨道</span>
<span class="t" id="f1" style="left:548.50px;top:447.50px;font-size:13px;color:#e8951c;letter-spacing:-0.305px;">0976</span>
<span class="t" id="f2" style="left:602.50px;top:447.50px;font-size:13px;color:#e8951c;letter-spacing:-0.312px;">1 of 109</span>
<span class="t" id="r1" style="left:725.30px;top:439.00px;font-size:12.5px;color:#f0f0f0;letter-spacing:0.000px;">09</span>
<span class="t" id="r2" style="left:717.30px;top:457.80px;font-size:9.5px;color:#8a8a8a;letter-spacing:0.000px;">0975</span>
<span class="t" id="r3" style="left:1235.20px;top:457.00px;font-size:11.5px;color:#b0b0b0;letter-spacing:-0.798px;">1075</span>
<span class="t" id="n1" style="left:422.00px;top:508.30px;font-size:12px;color:#c4c4c4;letter-spacing:-0.129px;">相机切换</span>
<span class="t" id="n2" style="left:422.00px;top:567.00px;font-size:12.5px;color:#ffffff;letter-spacing:-0.129px;">Animation_folder</span>
<span class="t" id="n3" style="left:422.00px;top:595.00px;font-size:12.5px;color:#d4d4d4;letter-spacing:-0.123px;">character</span>
<span class="t" id="n4" style="left:422.00px;top:623.00px;font-size:12.5px;color:#d4d4d4;letter-spacing:-0.315px;">Hidden_folder</span>
<span class="t" id="n5" style="left:422.00px;top:651.00px;font-size:12.5px;color:#d4d4d4;letter-spacing:-0.056px;">props</span>
<span class="t" id="n6" style="left:422.00px;top:691.20px;font-size:12px;color:#c4c4c4;letter-spacing:-0.053px;">控制台变量</span>
<span class="t" id="n7" style="left:422.00px;top:731.50px;font-size:12.5px;color:#d4d4d4;letter-spacing:-0.337px;">SC01_shot043a_cam</span>
<span class="t" id="n8" style="left:432.00px;top:759.50px;font-size:12.5px;color:#d4d4d4;letter-spacing:-0.273px;">CameraComponent</span>
<span class="t" id="n9" style="left:390.50px;top:782.75px;font-size:12.5px;color:#e4e4e4;letter-spacing:0.053px;">36个项目（已选中1个）</span>
<span class="t" id="sec" style="left:729.20px;top:678.60px;font-size:12.5px;color:#c2c6ce;letter-spacing:0.052px;">r.DOF.Kernel.MaxForegroundRadius 0.005</span>
<span class="t" id="p1" style="left:677.50px;top:810.75px;font-size:12.5px;color:#8e8e8e;letter-spacing:0.422px;border-bottom:1px dotted #7a7a7a;height:15px;">-013*</span>
<span class="t" id="p2" style="left:743.75px;top:810.75px;font-size:12.5px;color:#8e8e8e;letter-spacing:0.212px;border-bottom:1px dotted #7a7a7a;height:15px;">0965*</span>
<span class="t" id="p3" style="left:1218.40px;top:810.75px;font-size:12.5px;color:#8e8e8e;letter-spacing:0.122px;border-bottom:1px dotted #7a7a7a;height:15px;">1095*</span>
<span class="t" id="p4" style="left:1286.10px;top:810.75px;font-size:12.5px;color:#8e8e8e;letter-spacing:0.003px;border-bottom:1px dotted #7a7a7a;height:15px;">1095*</span>

<!-- dialog -->
<div class="a" style="left:739px;top:385px;width:437px;height:180.5px;background:#444;box-shadow:0 2px 10px rgba(0,0,0,.55)"></div>
<div class="a" style="left:739px;top:385px;width:437px;height:29.5px;background:#fff"></div>
<div class="a" style="left:750px;top:459.6px;width:415px;height:1px;background:#565656"></div>
<div class="a" style="left:874px;top:457.4px;width:124px;height:2.4px;background:#ff8c00"></div>
<div class="a" style="left:768px;top:485px;width:379px;height:21.5px;background:#444;border-top:1px solid #505050;border-left:1px solid #4c4c4c;border-bottom:2px solid #262626;border-right:1.5px solid #2c2c2c"></div>
<div class="a" style="left:750px;top:532px;width:415px;height:22px;background:#444;border-top:1px solid #4e4e4e;border-left:1px solid #4c4c4c;border-bottom:2px solid #262626;border-right:1.5px solid #2c2c2c"></div>
<svg class="a" style="left:0;top:0" width="1920" height="1040" viewBox="0 0 1920 1040">
<path d="M950 537.4 H963 L956.5 548.4 Z" fill="#fff"/>
<!-- app icon -->
<rect x="747.6" y="392.6" width="13.4" height="11.6" fill="#f4f4f4" stroke="#9a9a9a" stroke-width=".8"/>
<rect x="749.2" y="394.6" width="5.4" height="8" fill="#3f7f7a"/><rect x="755.4" y="394.6" width="2.2" height="8" fill="#b4c4d8"/><rect x="758.2" y="394.6" width="1.6" height="8" fill="#d8dce4"/>
<path d="M1056.8 399.6 H1067.2" stroke="#111" stroke-width="1.1"/>
<rect x="1102" y="394.4" width="9.6" height="9.6" fill="none" stroke="#111" stroke-width="1.1"/>
<path d="M1147.8 394.2 L1158.2 404.6 M1158.2 394.2 L1147.8 404.6" stroke="#111" stroke-width="1.1"/>
</svg>

<span class="t" id="d1" style="left:768.00px;top:392.00px;font-size:12px;color:#000;letter-spacing:-0.024px;">关卡隐藏和K帧恢复工具</span>
<span class="t" id="d2" style="left:763.00px;top:434.75px;font-size:12px;color:#f6f6f6;letter-spacing:-0.002px;">隐藏物体恢复工具</span>
<span class="t" id="d3" style="left:887.50px;top:434.75px;font-size:12px;color:#ff8c00;letter-spacing:-0.064px;">动画信息恢复工具</span>
<span class="t" id="d4" style="left:862.50px;top:487.60px;font-size:14px;color:#fcfcfc;letter-spacing:0.204px;">新增/更新关卡动画导入定序器</span>

<svg class="a" style="left:0;top:0" width="1920" height="1040" viewBox="0 0 1920 1040" fill="none" stroke="#e8512b" stroke-width="3" stroke-linecap="round" stroke-linejoin="round">
<path d="M875 495.6 C800 512 640 552 531 575"/>
<path d="M543.2 569.4 L530.2 575.2 L540.6 579.6"/>
<path d="M887.5 495.6 C800 526 620 592 503.4 635"/>
<path d="M511.2 629 L502.8 635.4 L513.4 638.2"/>
</svg>

</div></div>
<div class="a" style="left:0;top:0;width:1920px;height:1040px;overflow:hidden;pointer-events:none"><span class="wm" style="left:32px;top:10px">李新园 1021</span><span class="wm" style="left:232px;top:10px">李新园 1021</span><span class="wm" style="left:432px;top:10px">李新园 1021</span><span class="wm" style="left:632px;top:10px">李新园 1021</span><span class="wm" style="left:832px;top:10px">李新园 1021</span><span class="wm" style="left:1032px;top:10px">李新园 1021</span><span class="wm" style="left:1232px;top:10px">李新园 1021</span><span class="wm" style="left:1432px;top:10px">李新园 1021</span><span class="wm" style="left:1632px;top:10px">李新园 1021</span><span class="wm" style="left:1832px;top:10px">李新园 1021</span><span class="wm" style="left:32px;top:110px">李新园 1021</span><span class="wm" style="left:232px;top:110px">李新园 1021</span><span class="wm" style="left:432px;top:110px">李新园 1021</span><span class="wm" style="left:632px;top:110px">李新园 1021</span><span class="wm" style="left:832px;top:110px">李新园 1021</span><span class="wm" style="left:1032px;top:110px">李新园 1021</span><span class="wm" style="left:1232px;top:110px">李新园 1021</span><span class="wm" style="left:1432px;top:110px">李新园 1021</span><span class="wm" style="left:1632px;top:110px">李新园 1021</span><span class="wm" style="left:1832px;top:110px">李新园 1021</span><span class="wm" style="left:32px;top:210px">李新园 1021</span><span class="wm" style="left:232px;top:210px">李新园 1021</span><span class="wm" style="left:432px;top:210px">李新园 1021</span><span class="wm" style="left:632px;top:210px">李新园 1021</span><span class="wm" style="left:832px;top:210px">李新园 1021</span><span class="wm" style="left:1032px;top:210px">李新园 1021</span><span class="wm" style="left:1232px;top:210px">李新园 1021</span><span class="wm" style="left:1432px;top:210px">李新园 1021</span><span class="wm" style="left:1632px;top:210px">李新园 1021</span><span class="wm" style="left:1832px;top:210px">李新园 1021</span><span class="wm" style="left:32px;top:310px">李新园 1021</span><span class="wm" style="left:232px;top:310px">李新园 1021</span><span class="wm" style="left:432px;top:310px">李新园 1021</span><span class="wm" style="left:632px;top:310px">李新园 1021</span><span class="wm" style="left:832px;top:310px">李新园 1021</span><span class="wm" style="left:1032px;top:310px">李新园 1021</span><span class="wm" style="left:1232px;top:310px">李新园 1021</span><span class="wm" style="left:1432px;top:310px">李新园 1021</span><span class="wm" style="left:1632px;top:310px">李新园 1021</span><span class="wm" style="left:1832px;top:310px">李新园 1021</span><span class="wm" style="left:32px;top:410px">李新园 1021</span><span class="wm" style="left:232px;top:410px">李新园 1021</span><span class="wm" style="left:432px;top:410px">李新园 1021</span><span class="wm" style="left:632px;top:410px">李新园 1021</span><span class="wm" style="left:832px;top:410px">李新园 1021</span><span class="wm" style="left:1032px;top:410px">李新园 1021</span><span class="wm" style="left:1232px;top:410px">李新园 1021</span><span class="wm" style="left:1432px;top:410px">李新园 1021</span><span class="wm" style="left:1632px;top:410px">李新园 1021</span><span class="wm" style="left:1832px;top:410px">李新园 1021</span><span class="wm" style="left:32px;top:510px">李新园 1021</span><span class="wm" style="left:232px;top:510px">李新园 1021</span><span class="wm" style="left:432px;top:510px">李新园 1021</span><span class="wm" style="left:632px;top:510px">李新园 1021</span><span class="wm" style="left:832px;top:510px">李新园 1021</span><span class="wm" style="left:1032px;top:510px">李新园 1021</span><span class="wm" style="left:1232px;top:510px">李新园 1021</span><span class="wm" style="left:1432px;top:510px">李新园 1021</span><span class="wm" style="left:1632px;top:510px">李新园 1021</span><span class="wm" style="left:1832px;top:510px">李新园 1021</span><span class="wm" style="left:32px;top:610px">李新园 1021</span><span class="wm" style="left:232px;top:610px">李新园 1021</span><span class="wm" style="left:432px;top:610px">李新园 1021</span><span class="wm" style="left:632px;top:610px">李新园 1021</span><span class="wm" style="left:832px;top:610px">李新园 1021</span><span class="wm" style="left:1032px;top:610px">李新园 1021</span><span class="wm" style="left:1232px;top:610px">李新园 1021</span><span class="wm" style="left:1432px;top:610px">李新园 1021</span><span class="wm" style="left:1632px;top:610px">李新园 1021</span><span class="wm" style="left:1832px;top:610px">李新园 1021</span><span class="wm" style="left:32px;top:710px">李新园 1021</span><span class="wm" style="left:232px;top:710px">李新园 1021</span><span class="wm" style="left:432px;top:710px">李新园 1021</span><span class="wm" style="left:632px;top:710px">李新园 1021</span><span class="wm" style="left:832px;top:710px">李新园 1021</span><span class="wm" style="left:1032px;top:710px">李新园 1021</span><span class="wm" style="left:1232px;top:710px">李新园 1021</span><span class="wm" style="left:1432px;top:710px">李新园 1021</span><span class="wm" style="left:1632px;top:710px">李新园 1021</span><span class="wm" style="left:1832px;top:710px">李新园 1021</span><span class="wm" style="left:32px;top:810px">李新园 1021</span><span class="wm" style="left:232px;top:810px">李新园 1021</span><span class="wm" style="left:432px;top:810px">李新园 1021</span><span class="wm" style="left:632px;top:810px">李新园 1021</span><span class="wm" style="left:832px;top:810px">李新园 1021</span><span class="wm" style="left:1032px;top:810px">李新园 1021</span><span class="wm" style="left:1232px;top:810px">李新园 1021</span><span class="wm" style="left:1432px;top:810px">李新园 1021</span><span class="wm" style="left:1632px;top:810px">李新园 1021</span><span class="wm" style="left:1832px;top:810px">李新园 1021</span><span class="wm" style="left:32px;top:910px">李新园 1021</span><span class="wm" style="left:232px;top:910px">李新园 1021</span><span class="wm" style="left:432px;top:910px">李新园 1021</span><span class="wm" style="left:632px;top:910px">李新园 1021</span><span class="wm" style="left:832px;top:910px">李新园 1021</span><span class="wm" style="left:1032px;top:910px">李新园 1021</span><span class="wm" style="left:1232px;top:910px">李新园 1021</span><span class="wm" style="left:1432px;top:910px">李新园 1021</span><span class="wm" style="left:1632px;top:910px">李新园 1021</span><span class="wm" style="left:1832px;top:910px">李新园 1021</span><span class="wm" style="left:32px;top:1010px">李新园 1021</span><span class="wm" style="left:232px;top:1010px">李新园 1021</span><span class="wm" style="left:432px;top:1010px">李新园 1021</span><span class="wm" style="left:632px;top:1010px">李新园 1021</span><span class="wm" style="left:832px;top:1010px">李新园 1021</span><span class="wm" style="left:1032px;top:1010px">李新园 1021</span><span class="wm" style="left:1232px;top:1010px">李新园 1021</span><span class="wm" style="left:1432px;top:1010px">李新园 1021</span><span class="wm" style="left:1632px;top:1010px">李新园 1021</span><span class="wm" style="left:1832px;top:1010px">李新园 1021</span></div>

</body></html>
